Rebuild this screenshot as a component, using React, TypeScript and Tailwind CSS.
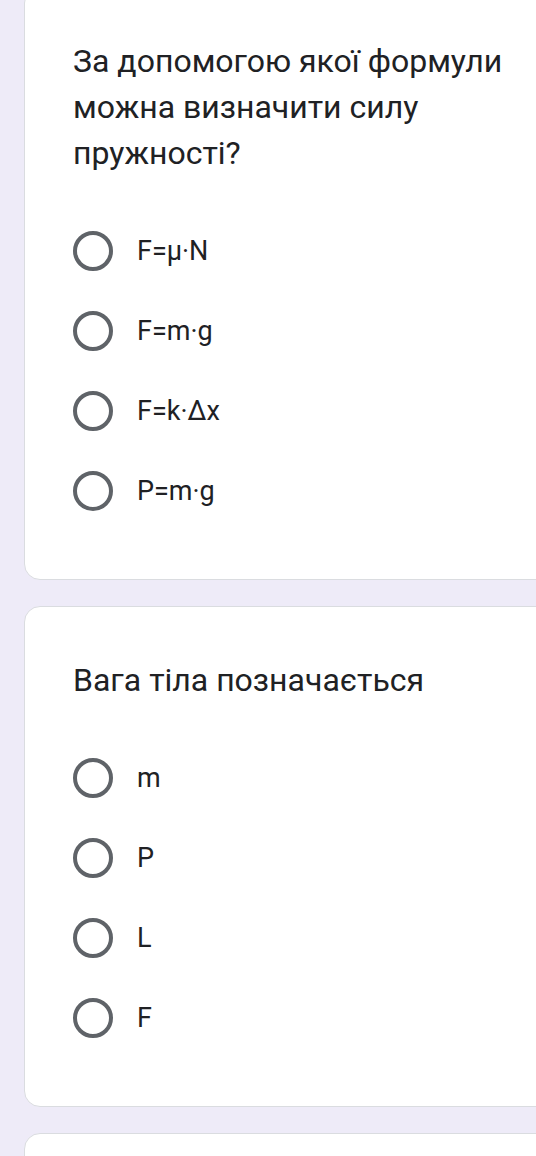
import React from "react";

type Q = { title: string[]; options: string[] };

const questions: Q[] = [
  {
    title: ["За допомогою якої формули", "можна визначити силу", "пружності?"],
    options: ["F=μ·N", "F=m·g", "F=k·Δx", "P=m·g"],
  },
  {
    title: ["Вага тіла позначається"],
    options: ["m", "P", "L", "F"],
  },
];

function Card({ q, first }: { q: Q; first?: boolean }) {
  return (
    <div
      className={
        "ml-[24px] w-[560px] shrink-0 bg-white border border-[#dadce0] rounded-[16px] pt-[50px] pb-[48px] pl-[48px] " +
        (first ? "mt-[-13px]" : "")
      }
    >
      <div className="text-[32px] leading-[46px] text-[#202124] font-['Roboto',sans-serif]">
        {q.title.map((t, i) => (
          <div key={i}>{t}</div>
        ))}
      </div>
      <div className="mt-[35px] flex flex-col">
        {q.options.map((o, i) => (
          <div key={i} className="h-[80px] flex items-center gap-[24px]">
            <div className="w-[40px] h-[40px] rounded-full border-[4px] border-[#5f6368] shrink-0" />
            <span className="text-[27px] text-[#202124] font-['Roboto',sans-serif] leading-none">
              {o}
            </span>
          </div>
        ))}
      </div>
    </div>
  );
}

export default function App() {
  return (
    <div className="w-[536px] h-[1156px] overflow-hidden bg-[#eeebf8] flex flex-col gap-[26px]">
      <Card q={questions[0]} first />
      <Card q={questions[1]} />
      <div className="ml-[24px] w-[560px] h-[200px] shrink-0 bg-white border border-[#dadce0] rounded-[16px]" />
    </div>
  );
}
